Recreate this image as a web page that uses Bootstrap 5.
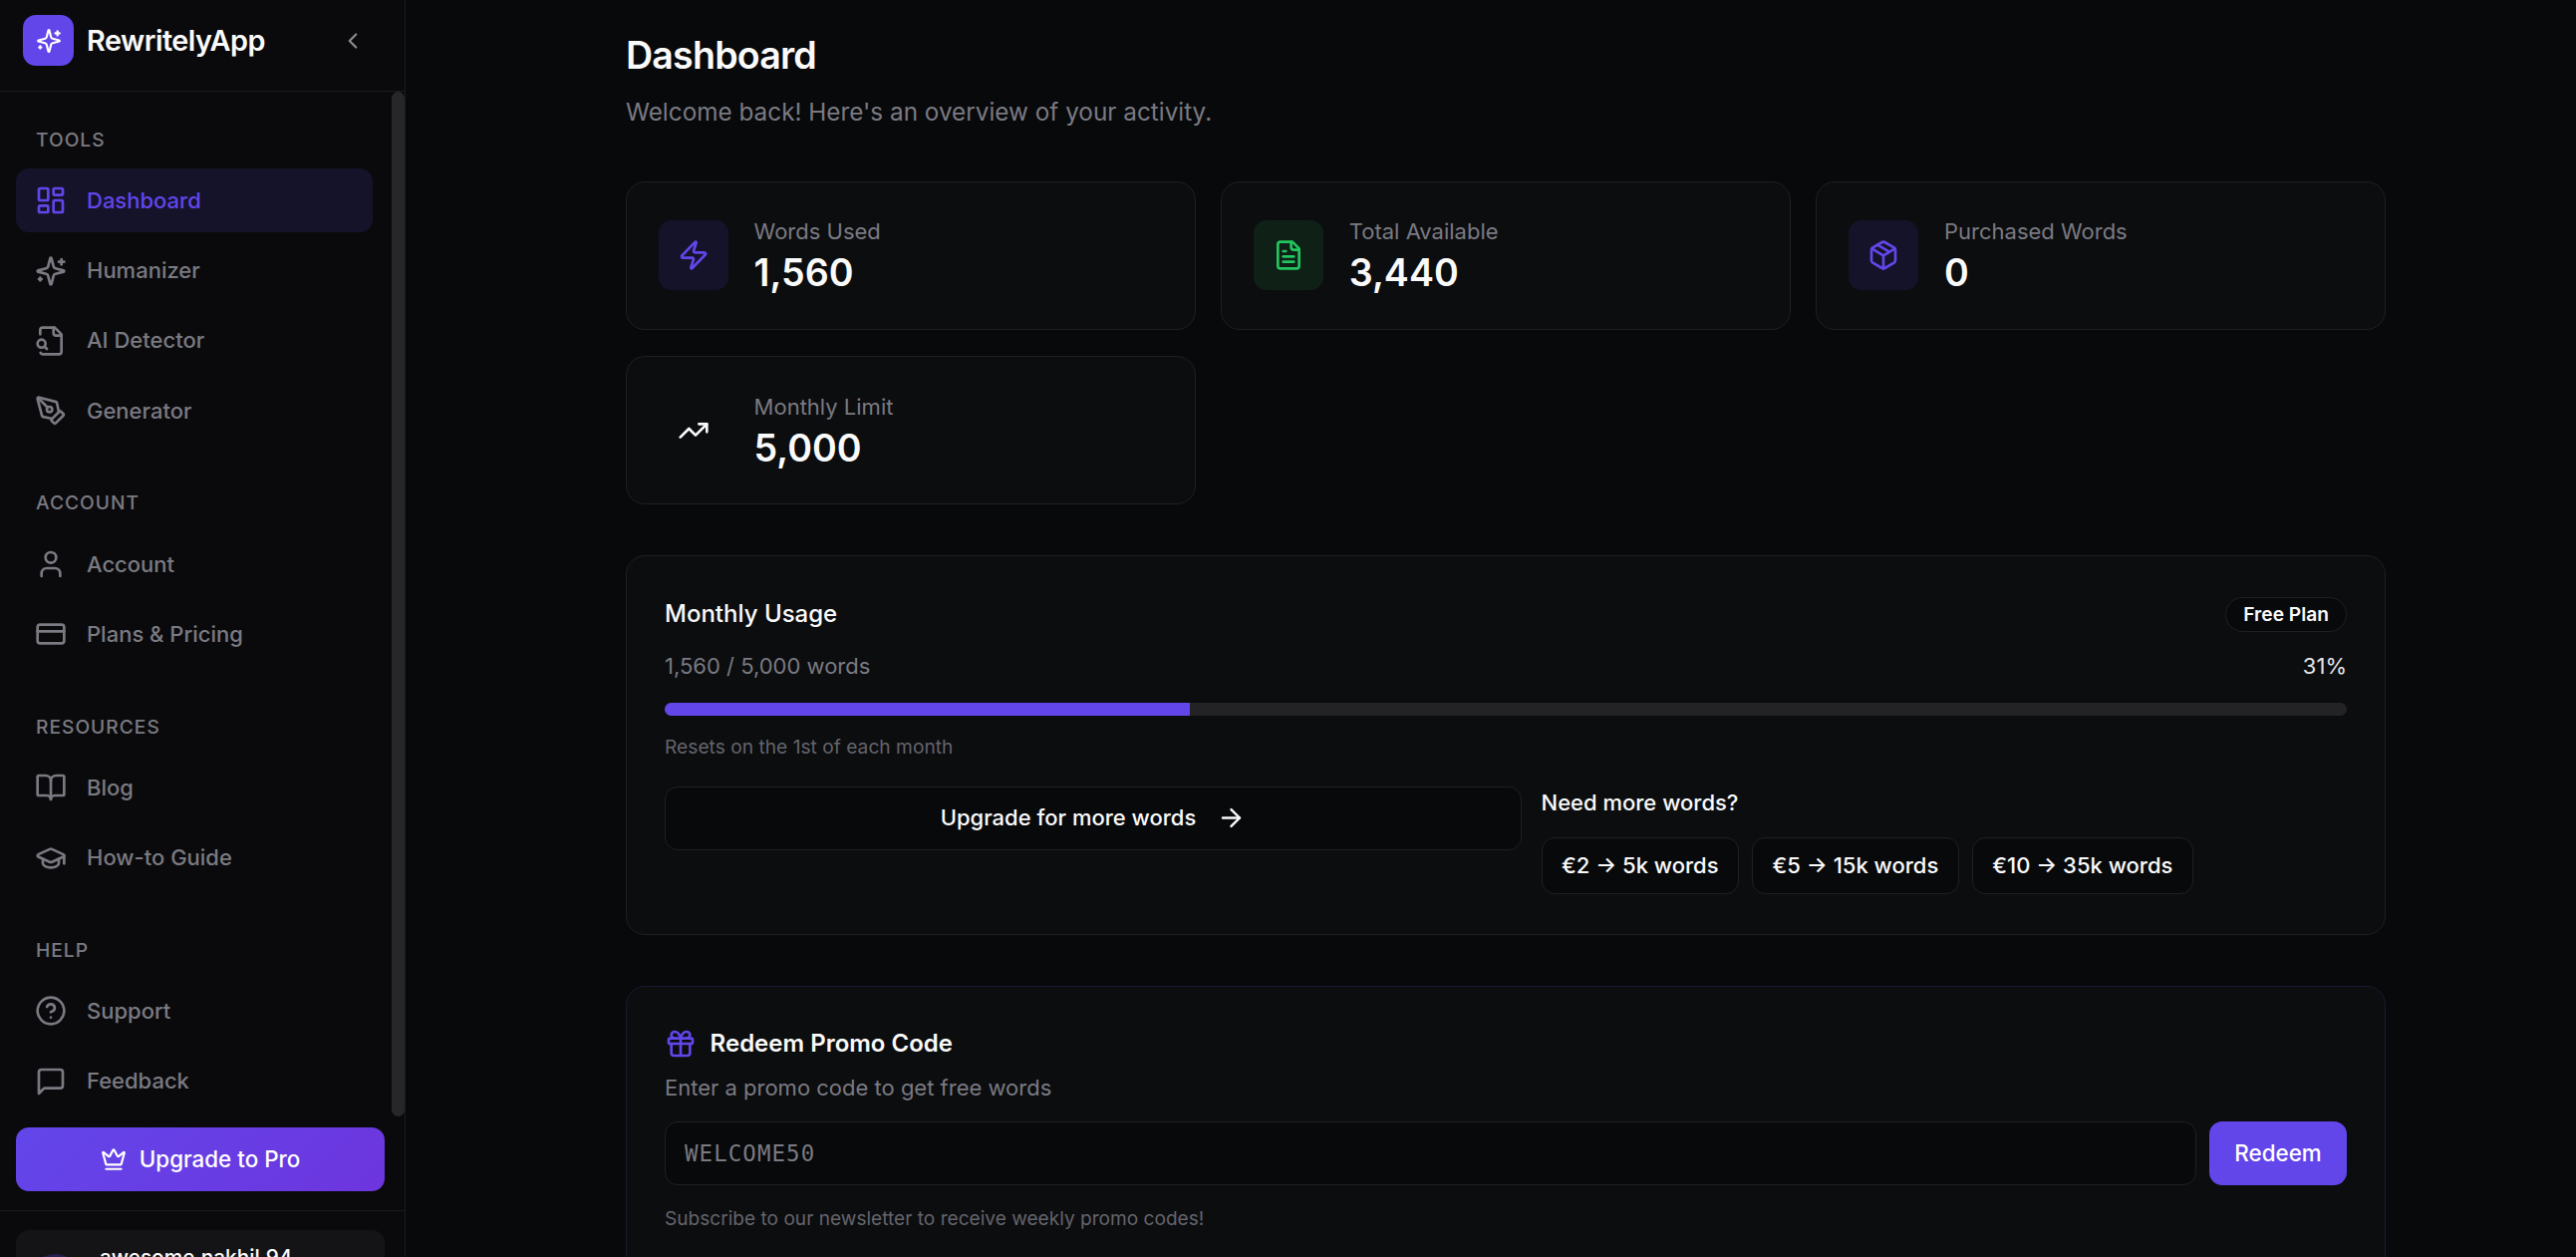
<!DOCTYPE html>
<html lang="en">
<head>
  <meta charset="UTF-8" />
  <title>Dashboard - RewritelyApp</title>
  <link href="https://cdn.jsdelivr.net/npm/bootstrap@5.3.3/dist/css/bootstrap.min.css" rel="stylesheet" />
  <style>
    html, body { height: 100%; overflow: hidden; }
    body { background: #08090b; font-family: Inter, sans-serif; color: #fafafa; font-size: 22px; }
    .ic { fill: none; stroke: currentColor; stroke-width: 2; stroke-linecap: round; stroke-linejoin: round; flex-shrink: 0; }

    .side { width: 407px; height: 1261px; flex-shrink: 0; background: #0a0a0c; border-right: 1px solid #1c1c20; overflow: hidden; }
    .side-top { height: 92px; padding: 15px 23px 25px; border-bottom: 1px solid #1c1c20; flex-shrink: 0; }
    .logo-box { width: 51px; height: 51px; border-radius: 13px; background: #6246ea; color: #fff; }
    .logo-name { font-size: 28.8px; font-weight: 600; letter-spacing: -.5px; margin-left: 13px; color: #fafafa; }
    .collapse-btn { margin-left: auto; margin-right: 16px; color: #8b8b93; }
    .side-body { height: 1028px; position: relative; flex-shrink: 0; padding: 33.6px 32px 0 16px; overflow: hidden; }
    .side-thumb { position: absolute; right: 0; top: 0; bottom: 0; width: 13px; border-radius: 7px; background: #27272a; }
    .sec-label { font-size: 19.2px; line-height: 29px; letter-spacing: 1px; font-weight: 500; color: #7a7a82; padding-left: 20px; margin-bottom: 14.6px; }
    .nav-sec { margin-bottom: 46.1px; }
    .side-link { height: 64px; margin-bottom: 6.4px; padding-left: 19px; border-radius: 13px; color: #7a7a82; font-weight: 500; font-size: 22px; gap: 20px; text-decoration: none; }
    .side-link.on { background: #15132a; color: #6246ea; }
    .side-bottom { padding: 11px 20px 0 16px; }
    .go-pro { height: 64px; width: 370px; border: 0; border-radius: 13px; background: linear-gradient(135deg, #6246ea, #6d35de); color: #fff; font-weight: 500; font-size: 22.4px; gap: 13px; }
    .side-rule { border-top: 1px solid #1c1c20; margin: 19px -20px 19px -16px; }
    .user-box { height: 90px; border-radius: 13px; background: #141417; padding: 14px 14px; gap: 19px; align-items: flex-start; }
    .user-pic { width: 51px; height: 51px; border-radius: 50%; background: #241f4d; flex-shrink: 0; margin-top: 10px; }
    .user-mail { font-weight: 500; font-size: 20.8px; color: #fafafa; line-height: 28px; }

    .main-col { padding: 28.5px 191px 0 221px; flex-grow: 1; min-width: 0; }
    .page-title { font-size: 37.6px; font-weight: 600; line-height: 54px; margin: 0; letter-spacing: -.8px; }
    .page-sub { color: #7a7a82; font-size: 24.3px; line-height: 36px; margin: 11px 0 0; }

    .stats { --bs-gutter-x: 25.6px; --bs-gutter-y: 26.6px; margin-top: 25.5px; }
    .pane { background: #0c0d0f; border: 1px solid #1f2023; border-radius: 19px; }
    .stat { height: 149px; padding: 0 32px; gap: 25.6px; }
    .stat-ic { width: 70px; height: 70px; border-radius: 13px; }
    .tint-p { background: #15132a; color: #6246ea; }
    .tint-g { background: #0f2017; color: #22c55e; }
    .stat-ic.plain { color: #fafafa; }
    .stat-txt { padding-top: 4px; }
    .stat-lab { color: #7a7a82; font-size: 22px; line-height: 30px; margin-bottom: 2px; }
    .stat-num { font-size: 37.6px; font-weight: 600; line-height: 50px; }

    .usage { margin-top: 51px; height: 380.5px; padding: 41px 38px 0; }
    .usage-title { font-size: 24px; font-weight: 500; margin: 0; }
    .plan-pill { border: 1px solid #1f2023; border-radius: 20px; background: #08090b; color: #fafafa; font-size: 19.2px; font-weight: 600; padding: 4px 17px; line-height: 25px; }
    .usage-count { color: #7a7a82; font-size: 22px; line-height: 34px; margin-top: 17px; }
    .usage-pct { color: #e4e4e7; }
    .progress.usage-bar { height: 12.8px; background: #232326; border-radius: 7px; margin-top: 20px; }
    .usage-bar .progress-bar { background: #6246ea; }
    .usage-note { color: #64646c; font-size: 19.2px; line-height: 28px; margin-top: 17px; }
    .usage-row { margin-top: 26px; }
    .dark-btn { background: #08090b; border: 1px solid #1f2023; border-radius: 13px; color: #fafafa; font-weight: 500; font-size: 22px; }
    .usage-cta { height: 64px; gap: 21px; width: 860px; flex-shrink: 0; }
    .more-col { margin-left: 19.5px; margin-top: -1px; }
    .more-q { font-size: 22px; font-weight: 500; line-height: 34px; }
    .price-row { gap: 13px; margin-top: 18px; }
    .price-btn { height: 57px; padding: 0 19.5px; }

    .promo { margin-top: 51px; height: 420px; padding: 36.5px 38px 0; border-color: #1a1933; }
    .promo-title { font-size: 24px; font-weight: 600; margin: 0; gap: 13.6px; line-height: 42px; }
    .promo-title .ic { color: #6246ea; }
    .promo-sub { color: #7a7a82; font-size: 22px; line-height: 34px; margin: 6px 0 0; }
    .promo-input.form-control { height: 64px; background: #08090b; border: 1px solid #1f2023; border-radius: 13px; color: #fafafa; font-family: "DejaVu Sans Mono", monospace; font-size: 22.4px; letter-spacing: 1.1px; padding: 0 19px; box-shadow: none; }
    .promo-input::placeholder { color: #7a7a82; opacity: 1; }
    .redeem-btn { height: 64px; width: 138px; flex-shrink: 0; background: #6246ea; border: 0; border-radius: 13px; color: #fff; font-weight: 500; font-size: 22.4px; }
    .promo-form { gap: 13px; margin-top: 17px; }
    .promo-note { color: #64646c; font-size: 19.1px; line-height: 28px; margin-top: 18.5px; }
  </style>
</head>
<body>
  <svg width="0" height="0" class="position-absolute">
    <symbol id="i-dash" viewBox="0 0 24 24"><rect x="3" y="3" width="7" height="9" rx="1"/><rect x="14" y="3" width="7" height="5" rx="1"/><rect x="14" y="12" width="7" height="9" rx="1"/><rect x="3" y="16" width="7" height="5" rx="1"/></symbol>
    <symbol id="i-spark" viewBox="0 0 24 24"><path d="M9.937 15.5A2 2 0 0 0 8.5 14.063l-6.135-1.582a.5.5 0 0 1 0-.962L8.5 9.936A2 2 0 0 0 9.937 8.5l1.582-6.135a.5.5 0 0 1 .963 0L14.063 8.5A2 2 0 0 0 15.5 9.937l6.135 1.581a.5.5 0 0 1 0 .964L15.5 14.063a2 2 0 0 0-1.437 1.437l-1.582 6.135a.5.5 0 0 1-.963 0z"/><path d="M20 3v4"/><path d="M22 5h-4"/><path d="M4 17v2"/><path d="M5 18H3"/></symbol>
    <symbol id="i-search" viewBox="0 0 24 24"><path d="M14 2v4a2 2 0 0 0 2 2h4"/><path d="M4.268 21a2 2 0 0 0 1.727 1H18a2 2 0 0 0 2-2V7l-5-5H6a2 2 0 0 0-2 2v3"/><path d="m9 18-1.5-1.5"/><circle cx="5" cy="14" r="3"/></symbol>
    <symbol id="i-pen" viewBox="0 0 24 24"><path d="M15.707 21.293a1 1 0 0 1-1.414 0l-1.586-1.586a1 1 0 0 1 0-1.414l5.586-5.586a1 1 0 0 1 1.414 0l1.586 1.586a1 1 0 0 1 0 1.414z"/><path d="m18 13-1.375-6.874a1 1 0 0 0-.746-.776L3.235 2.028a1 1 0 0 0-1.207 1.207L5.35 15.879a1 1 0 0 0 .776.746L13 18"/><path d="m2.3 2.3 7.286 7.286"/><circle cx="11" cy="11" r="2"/></symbol>
    <symbol id="i-user" viewBox="0 0 24 24"><path d="M19 21v-2a4 4 0 0 0-4-4H9a4 4 0 0 0-4 4v2"/><circle cx="12" cy="7" r="4"/></symbol>
    <symbol id="i-card" viewBox="0 0 24 24"><rect x="2" y="5" width="20" height="14" rx="2"/><line x1="2" x2="22" y1="10" y2="10"/></symbol>
    <symbol id="i-book" viewBox="0 0 24 24"><path d="M12 7v14"/><path d="M3 18a1 1 0 0 1-1-1V4a1 1 0 0 1 1-1h5a4 4 0 0 1 4 4 4 4 0 0 1 4-4h5a1 1 0 0 1 1 1v13a1 1 0 0 1-1 1h-6a3 3 0 0 0-3 3 3 3 0 0 0-3-3z"/></symbol>
    <symbol id="i-cap" viewBox="0 0 24 24"><path d="M21.42 10.922a1 1 0 0 0-.019-1.838L12.83 5.18a2 2 0 0 0-1.66 0L2.6 9.08a1 1 0 0 0 0 1.832l8.57 3.908a2 2 0 0 0 1.66 0z"/><path d="M22 10v6"/><path d="M6 12.5V16a6 3 0 0 0 12 0v-3.5"/></symbol>
    <symbol id="i-help" viewBox="0 0 24 24"><circle cx="12" cy="12" r="10"/><path d="M9.09 9a3 3 0 0 1 5.83 1c0 2-3 3-3 3"/><path d="M12 17h.01"/></symbol>
    <symbol id="i-msg" viewBox="0 0 24 24"><path d="M21 15a2 2 0 0 1-2 2H7l-4 4V5a2 2 0 0 1 2-2h14a2 2 0 0 1 2 2z"/></symbol>
    <symbol id="i-crown" viewBox="0 0 24 24"><path d="M11.562 3.266a.5.5 0 0 1 .876 0L15.39 8.87a1 1 0 0 0 1.516.294L21.183 5.5a.5.5 0 0 1 .798.519l-2.834 10.246a1 1 0 0 1-.956.734H5.81a1 1 0 0 1-.957-.734L2.02 6.02a.5.5 0 0 1 .798-.519l4.276 3.664a1 1 0 0 0 1.516-.294z"/><path d="M5 21h14"/></symbol>
    <symbol id="i-zap" viewBox="0 0 24 24"><path d="M4 14a1 1 0 0 1-.78-1.63l9.9-10.2a.5.5 0 0 1 .86.46l-1.92 6.02A1 1 0 0 0 13 10h7a1 1 0 0 1 .78 1.63l-9.9 10.2a.5.5 0 0 1-.86-.46l1.92-6.02A1 1 0 0 0 11 14z"/></symbol>
    <symbol id="i-file" viewBox="0 0 24 24"><path d="M15 2H6a2 2 0 0 0-2 2v16a2 2 0 0 0 2 2h12a2 2 0 0 0 2-2V7Z"/><path d="M14 2v4a2 2 0 0 0 2 2h4"/><path d="M10 9H8"/><path d="M16 13H8"/><path d="M16 17H8"/></symbol>
    <symbol id="i-box" viewBox="0 0 24 24"><path d="M11 21.73a2 2 0 0 0 2 0l7-4A2 2 0 0 0 21 16V8a2 2 0 0 0-1-1.73l-7-4a2 2 0 0 0-2 0l-7 4A2 2 0 0 0 3 8v8a2 2 0 0 0 1 1.73z"/><path d="M12 22V12"/><path d="m3.3 7 7.703 4.734a2 2 0 0 0 1.994 0L20.7 7"/><path d="m7.5 4.27 9 5.15"/></symbol>
    <symbol id="i-trend" viewBox="0 0 24 24"><path d="M16 7h6v6"/><path d="m22 7-8.5 8.5-5-5L2 17"/></symbol>
    <symbol id="i-arrow" viewBox="0 0 24 24"><path d="M5 12h14"/><path d="m12 5 7 7-7 7"/></symbol>
    <symbol id="i-gift" viewBox="0 0 24 24"><rect x="3" y="8" width="18" height="4" rx="1"/><path d="M12 8v13"/><path d="M19 12v7a2 2 0 0 1-2 2H7a2 2 0 0 1-2-2v-7"/><path d="M7.5 8a2.5 2.5 0 0 1 0-5A4.8 8 0 0 1 12 8a4.8 8 0 0 1 4.5-5 2.5 2.5 0 0 1 0 5"/></symbol>
    <symbol id="i-left" viewBox="0 0 24 24"><path d="m15 18-6-6 6-6"/></symbol>
  </svg>

  <div class="d-flex">
    <aside class="side d-flex flex-column">
      <div class="side-top d-flex align-items-center">
        <div class="logo-box d-flex align-items-center justify-content-center">
          <svg class="ic" width="26" height="26"><use href="#i-spark"/></svg>
        </div>
        <span class="logo-name">RewritelyApp</span>
        <svg class="ic collapse-btn" width="26" height="26"><use href="#i-left"/></svg>
      </div>

      <div class="side-body">
        <div class="side-thumb"></div>
        <div class="nav-sec">
          <div class="sec-label">TOOLS</div>
          <a class="side-link on d-flex align-items-center" href="#"><svg class="ic" width="32" height="32"><use href="#i-dash"/></svg>Dashboard</a>
          <a class="side-link d-flex align-items-center" href="#"><svg class="ic" width="32" height="32"><use href="#i-spark"/></svg>Humanizer</a>
          <a class="side-link d-flex align-items-center" href="#"><svg class="ic" width="32" height="32"><use href="#i-search"/></svg>AI Detector</a>
          <a class="side-link d-flex align-items-center" href="#"><svg class="ic" width="32" height="32"><use href="#i-pen"/></svg>Generator</a>
        </div>
        <div class="nav-sec">
          <div class="sec-label">ACCOUNT</div>
          <a class="side-link d-flex align-items-center" href="#"><svg class="ic" width="32" height="32"><use href="#i-user"/></svg>Account</a>
          <a class="side-link d-flex align-items-center" href="#"><svg class="ic" width="32" height="32"><use href="#i-card"/></svg>Plans &amp; Pricing</a>
        </div>
        <div class="nav-sec">
          <div class="sec-label">RESOURCES</div>
          <a class="side-link d-flex align-items-center" href="#"><svg class="ic" width="32" height="32"><use href="#i-book"/></svg>Blog</a>
          <a class="side-link d-flex align-items-center" href="#"><svg class="ic" width="32" height="32"><use href="#i-cap"/></svg>How-to Guide</a>
        </div>
        <div class="nav-sec">
          <div class="sec-label">HELP</div>
          <a class="side-link d-flex align-items-center" href="#"><svg class="ic" width="32" height="32"><use href="#i-help"/></svg>Support</a>
          <a class="side-link d-flex align-items-center" href="#"><svg class="ic" width="32" height="32"><use href="#i-msg"/></svg>Feedback</a>
        </div>
      </div>

      <div class="side-bottom">
        <button class="btn go-pro d-flex align-items-center justify-content-center"><svg class="ic" width="26" height="26"><use href="#i-crown"/></svg>Upgrade to Pro</button>
        <div class="side-rule"></div>
        <div class="user-box d-flex">
          <div class="user-pic"></div>
          <div class="user-mail">awesome.nakhil.94</div>
        </div>
      </div>
    </aside>

    <main class="main-col">
      <h1 class="page-title">Dashboard</h1>
      <p class="page-sub">Welcome back! Here's an overview of your activity.</p>

      <div class="row stats">
        <div class="col-4"><div class="pane stat d-flex align-items-center">
          <div class="stat-ic tint-p d-flex align-items-center justify-content-center"><svg class="ic" width="32" height="32"><use href="#i-zap"/></svg></div>
          <div class="stat-txt"><div class="stat-lab">Words Used</div><div class="stat-num">1,560</div></div>
        </div></div>
        <div class="col-4"><div class="pane stat d-flex align-items-center">
          <div class="stat-ic tint-g d-flex align-items-center justify-content-center"><svg class="ic" width="32" height="32"><use href="#i-file"/></svg></div>
          <div class="stat-txt"><div class="stat-lab">Total Available</div><div class="stat-num">3,440</div></div>
        </div></div>
        <div class="col-4"><div class="pane stat d-flex align-items-center">
          <div class="stat-ic tint-p d-flex align-items-center justify-content-center"><svg class="ic" width="32" height="32"><use href="#i-box"/></svg></div>
          <div class="stat-txt"><div class="stat-lab">Purchased Words</div><div class="stat-num">0</div></div>
        </div></div>
        <div class="col-4"><div class="pane stat d-flex align-items-center">
          <div class="stat-ic plain d-flex align-items-center justify-content-center"><svg class="ic" width="32" height="32"><use href="#i-trend"/></svg></div>
          <div class="stat-txt"><div class="stat-lab">Monthly Limit</div><div class="stat-num">5,000</div></div>
        </div></div>
      </div>

      <section class="pane usage">
        <div class="d-flex justify-content-between align-items-center">
          <h2 class="usage-title">Monthly Usage</h2>
          <span class="plan-pill">Free Plan</span>
        </div>
        <div class="usage-count d-flex justify-content-between"><span>1,560 / 5,000 words</span><span class="usage-pct">31%</span></div>
        <div class="progress usage-bar"><div class="progress-bar" style="width: 31.2%"></div></div>
        <div class="usage-note">Resets on the 1st of each month</div>
        <div class="usage-row d-flex align-items-start">
          <button class="btn dark-btn usage-cta d-flex align-items-center justify-content-center">Upgrade for more words<svg class="ic" width="29" height="29"><use href="#i-arrow"/></svg></button>
          <div class="more-col">
            <div class="more-q">Need more words?</div>
            <div class="price-row d-flex">
              <button class="btn dark-btn price-btn">€2 → 5k words</button>
              <button class="btn dark-btn price-btn">€5 → 15k words</button>
              <button class="btn dark-btn price-btn">€10 → 35k words</button>
            </div>
          </div>
        </div>
      </section>

      <section class="pane promo">
        <h2 class="promo-title d-flex align-items-center"><svg class="ic" width="32" height="32"><use href="#i-gift"/></svg>Redeem Promo Code</h2>
        <p class="promo-sub">Enter a promo code to get free words</p>
        <div class="promo-form d-flex">
          <input class="form-control promo-input" placeholder="WELCOME50" />
          <button class="btn redeem-btn">Redeem</button>
        </div>
        <div class="promo-note">Subscribe to our newsletter to receive weekly promo codes!</div>
      </section>
    </main>
  </div>
  <script src="https://cdn.jsdelivr.net/npm/bootstrap@5.3.3/dist/js/bootstrap.bundle.min.js"></script>
</body>
</html>
